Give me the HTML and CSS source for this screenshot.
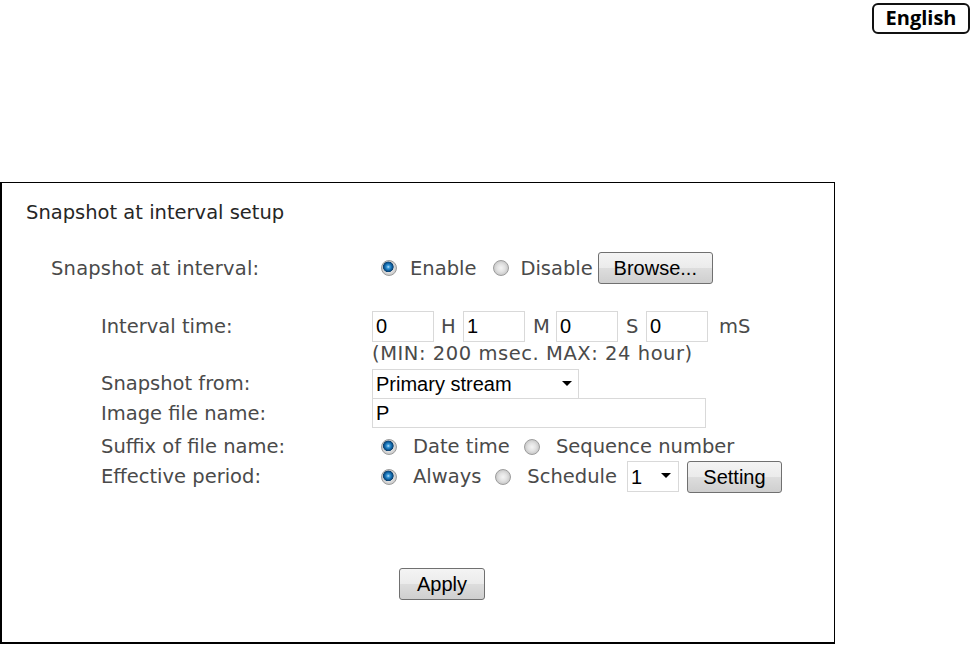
FILE: index.html
```html
<!DOCTYPE html>
<html>
<head>
<meta charset="utf-8">
<title>Snapshot at interval setup</title>
<link rel="stylesheet" href="styles.css">
</head>
<body>
<div class="topbar">
  <div class="lang">English</div>
</div>
<div class="panel">
  <div class="title">Snapshot at interval setup</div>

  <div class="row row-main">
    <div class="label label-main">Snapshot at interval:</div>
    <div class="ctrl">
      <input type="radio" class="radio" name="en" checked>
      <span class="opt">Enable</span>
      <input type="radio" class="radio" name="en">
      <span class="opt">Disable</span>
      <button class="btn btn-browse">Browse...</button>
    </div>
  </div>

  <div class="row row-interval">
    <div class="label">Interval time:</div>
    <div class="ctrl">
      <input class="txt txt-num" value="0"><span class="unit unit-h">H</span>
      <input class="txt txt-num" value="1"><span class="unit unit-m">M</span>
      <input class="txt txt-num" value="0"><span class="unit unit-s">S</span>
      <input class="txt txt-num" value="0"><span class="unit unit-ms">mS</span>
    </div>
  </div>

  <div class="row row-hint">
    <div class="label"></div>
    <div class="ctrl hint">(MIN: 200 msec. MAX: 24 hour)</div>
  </div>

  <div class="row row-from">
    <div class="label">Snapshot from:</div>
    <div class="ctrl">
      <span class="sel sel-stream"><select><option>Primary stream</option></select></span>
    </div>
  </div>

  <div class="row row-name">
    <div class="label">Image file name:</div>
    <div class="ctrl">
      <input class="txt txt-name" value="P">
    </div>
  </div>

  <div class="row row-suffix">
    <div class="label">Suffix of file name:</div>
    <div class="ctrl">
      <input type="radio" class="radio r2" name="sf" checked>
      <span class="opt">Date time</span>
      <input type="radio" class="radio r2" name="sf">
      <span class="opt">Sequence number</span>
    </div>
  </div>

  <div class="row row-period">
    <div class="label">Effective period:</div>
    <div class="ctrl">
      <input type="radio" class="radio r2" name="ep" checked>
      <span class="opt">Always</span>
      <input type="radio" class="radio r2" name="ep">
      <span class="opt">Schedule</span>
      <span class="sel sel-num"><select><option>1</option></select></span>
      <button class="btn btn-setting">Setting</button>
    </div>
  </div>

  <div class="row row-apply">
    <div class="label"></div>
    <div class="ctrl">
      <button class="btn btn-apply">Apply</button>
    </div>
  </div>
</div>
</body>
</html>
```

FILE: styles.css
```css
html, body {
  margin: 0;
  padding: 0;
  background: #fff;
}

body {
  font-family: "DejaVu Sans", Verdana, sans-serif;
  font-size: 19.5px;
  color: #4a4a4a;
}

.topbar {
  display: flex;
  justify-content: flex-end;
  padding: 3px 5px 0 0;
  height: 182px;
  box-sizing: border-box;
}

.lang {
  width: 98px;
  height: 31px;
  box-sizing: border-box;
  border: 2px solid #111;
  border-radius: 6px;
  font-family: "Open Sans", sans-serif;
  font-weight: 700;
  font-size: 20px;
  color: #000;
  display: flex;
  align-items: center;
  justify-content: center;
  line-height: 1;
  padding-bottom: 2px;
}

.panel {
  width: 835px;
  height: 462px;
  box-sizing: border-box;
  border: 1px solid #000;
  border-left-width: 2px;
  border-bottom-width: 2px;
  padding: 18px 0 0 24px;
}

.title {
  height: 24px;
  line-height: 24px;
  color: #262626;
}

.row {
  display: flex;
  align-items: center;
}

.label {
  width: 346px;
  flex: none;
  box-sizing: border-box;
  padding-left: 75px;
  white-space: nowrap;
}

.label-main {
  padding-left: 25px;
  letter-spacing: 0.2px;
}

.ctrl {
  display: flex;
  align-items: center;
  white-space: nowrap;
}

.row-main { margin-top: 27px; height: 32px; }
.row-interval { margin-top: 27px; height: 31px; }
.row-hint { height: 24px; line-height: 24px; }
.row-from { margin-top: 3px; height: 29px; }
.row-name { height: 30px; }
.row-suffix { margin-top: 4px; height: 29px; }
.row-period { height: 31px; }
.row-apply { margin-top: 75px; height: 33px; }

/* radios */
.radio {
  appearance: none;
  -webkit-appearance: none;
  width: 16px;
  height: 16px;
  margin: 0 13px 0 9px;
  border-radius: 50%;
  border: 1px solid #9c9c9c;
  box-sizing: border-box;
  background: radial-gradient(circle at 50% 50%, #f4f4f4 0, #e2e2e2 4px, #d2d2d2 6px, #c4c4c4 8px);
  flex: none;
}

.radio:checked {
  background:
    radial-gradient(circle at 45% 42%, #c4e8ff 0, #3f9ddc 1.5px, #0f64a6 3.5px, #0a3f6e 5px, rgba(0,0,0,0) 5.6px),
    radial-gradient(circle at 50% 50%, #f4f4f4 0, #e2e2e2 4px, #d2d2d2 6px, #c4c4c4 8px);
}

.r2 { margin-right: 16px; }

.opt {
  margin-right: 6px;
}

.row-main .opt { margin-right: 4px; }
.row-main .opt + .radio { margin-left: 13px; margin-right: 11px; }
.row-suffix .opt + .radio,
.row-period .opt + .radio { margin-left: 8px; margin-right: 16px; }

/* buttons */
.btn {
  font-family: "Liberation Sans", Arial, sans-serif;
  font-size: 20px;
  color: #000;
  height: 32px;
  box-sizing: border-box;
  border: 1px solid #707070;
  border-radius: 3px;
  background: linear-gradient(to bottom, #f4f4f4 0%, #ebebeb 50%, #dddddd 51%, #cfcfcf 100%);
  padding: 0 13px;
  margin: 0;
  line-height: 28px;
}

.btn-browse { width: 115px; margin-left: 1px; }
.btn-setting { width: 95px; margin-left: 8px; }
.btn-apply { width: 86px; margin-left: 27px; }

/* text inputs */
.txt {
  font-family: "Liberation Sans", Arial, sans-serif;
  font-size: 20px;
  color: #000;
  border: 1px solid #d9d9d9;
  box-sizing: border-box;
  padding: 0 3px;
  margin: 0;
  background: #fff;
  outline: none;
}

.txt-num {
  width: 62px;
  height: 31px;
}

.unit {
  margin-left: 7px;
  flex: none;
}

.unit-h { width: 22px; }
.unit-m { width: 23px; margin-left: 8px; }
.unit-s { width: 20px; margin-left: 8px; }
.unit-ms { margin-left: 11px; }

.txt-name {
  width: 334px;
  height: 30px;
}

.hint {
  color: #4a4a4a;
  letter-spacing: 0.55px;
}

/* selects */
.sel {
  position: relative;
  display: inline-block;
}

.sel select {
  appearance: none;
  -webkit-appearance: none;
  font-family: "Liberation Sans", Arial, sans-serif;
  font-size: 20px;
  color: #000;
  border: 1px solid #d9d9d9;
  background: #fff;
  box-sizing: border-box;
  padding: 0 3px;
  margin: 0;
  height: 30px;
  outline: none;
  display: block;
}

.sel::after {
  content: "";
  position: absolute;
  top: 12px;
  border-left: 5px solid transparent;
  border-right: 5px solid transparent;
  border-top: 5px solid #000;
}

.sel-stream select { width: 207px; }
.sel-stream::after { left: 190px; }

.sel-num select { width: 52px; height: 31px; }
.sel-num::after { left: 34px; }
.sel-num { margin-left: 4px; }
```
